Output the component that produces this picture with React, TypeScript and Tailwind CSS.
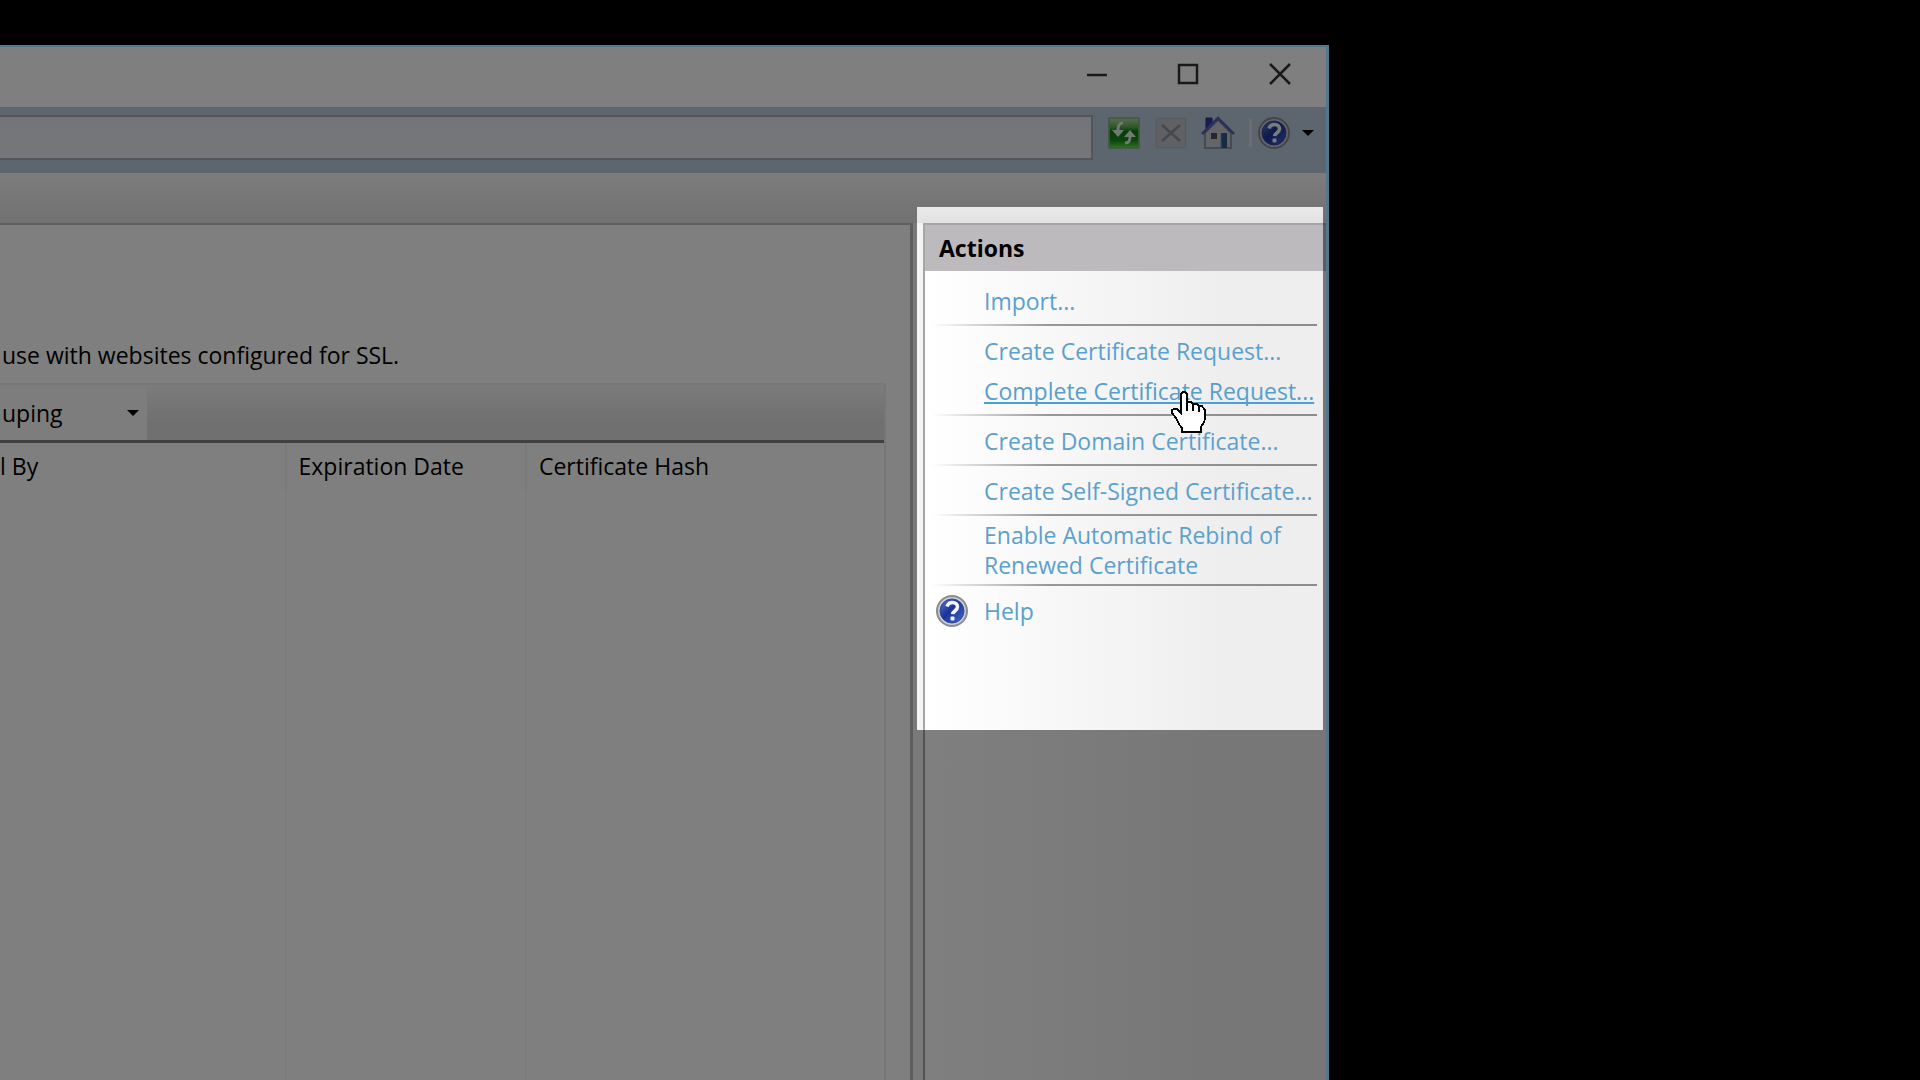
import React from "react";

function HelpIcon({ id }: { id: string }) {
  return (
    <svg viewBox="0 0 32 32" className="size-8 shrink-0" aria-hidden="true">
      <defs>
        <linearGradient id={id} x1="0" y1="0" x2="1" y2="1">
          <stop offset="0" stopColor="#5a78c8" />
          <stop offset="0.45" stopColor="#1b3596" />
          <stop offset="1" stopColor="#4468d0" />
        </linearGradient>
      </defs>
      <circle cx="16" cy="16" r="15" fill="#c9cbd4" stroke="#8b8b92" strokeWidth="2" />
      <circle cx="16" cy="16" r="12" fill={`url(#${id})`} stroke="#34489a" strokeWidth="1" />
      <path d="M11 11.500c1-3 3-4 5.500-4 3 0 5 1.700 5 4.300 0 4-4.500 3.700-4.800 7.400" fill="none" stroke="#f4f6ff" strokeWidth="3.600" />
      <rect x="14.500" y="21.500" width="4" height="4" rx="1" fill="#f4f6ff" />
    </svg>
  );
}

function RefreshIcon() {
  return (
    <svg viewBox="0 0 32 32" className="size-8" aria-hidden="true">
      <defs>
        <linearGradient id="refresh" x1="0" y1="0" x2="0" y2="1">
          <stop offset="0" stopColor="#b4dcae" />
          <stop offset="0.3" stopColor="#5cae50" />
          <stop offset="0.45" stopColor="#0b7a10" />
          <stop offset="0.75" stopColor="#12921a" />
          <stop offset="1" stopColor="#6ee050" />
        </linearGradient>
      </defs>
      <rect x="1" y="1" width="30" height="30" fill="url(#refresh)" stroke="#7fae7c" strokeWidth="1.500" />
      <path d="M15 6c-4 0-5 2-5 7" fill="none" stroke="#e4f2e2" strokeWidth="3" />
      <path d="M4 13h12l-6 7z" fill="#e4f2e2" />
      <path d="M17 26c4 0 5-2 5-6" fill="none" stroke="#e4f2e2" strokeWidth="3" />
      <path d="M16 20h12l-6-7z" fill="#e4f2e2" />
    </svg>
  );
}

function StopIcon() {
  return (
    <svg viewBox="0 0 32 32" className="size-8" aria-hidden="true">
      <rect x="1.500" y="1.500" width="29" height="29" fill="#c0c3c9" stroke="#b0b8c2" strokeWidth="1.500" />
      <path d="M7 8l18 16M25 8L7 24" fill="none" stroke="#8d9096" strokeWidth="2.500" />
    </svg>
  );
}

function HomeIcon() {
  return (
    <svg viewBox="0 0 34 34" className="h-[34px] w-[34px]" aria-hidden="true">
      <path d="M5 2h6v6l-6 6z" fill="#3038a8" stroke="#262d90" />
      <path d="M4 17L17 4l13 13v15H4z" fill="#c9cbd2" stroke="#7d828e" strokeWidth="1.500" />
      <path d="M1 18L17 2l16 16" fill="none" stroke="#5a60b4" strokeWidth="2.500" />
      <rect x="10" y="17" width="6" height="6" fill="#4c4f58" />
      <rect x="20" y="17" width="6" height="15" fill="#2c568e" />
      <path d="M20 17v15" stroke="#7e92b4" strokeWidth="1" />
    </svg>
  );
}

function HandCursor() {
  return (
    <svg
      viewBox="0 0 36 44"
      className="pointer-events-none absolute left-[246px] top-[166px] z-20 h-11 w-9"
      shapeRendering="crispEdges"
      aria-hidden="true"
    >
      <path
        d="M10 3l2-2h2l2 2v8h4l2 2h4l2 2h3l3 4v9l-1 3-3 5v5H11v-4l-3-4-3-6-4-5v-3l2-1h3l4 4z"
        fill="#fff"
        stroke="#000"
        strokeWidth="1.800"
      />
      <path d="M16 11v9M22 13v7M28 15v6" fill="none" stroke="#000" strokeWidth="1.800" />
    </svg>
  );
}

function Caret() {
  return <svg viewBox="0 0 12 6" className="h-1.5 w-3" aria-hidden="true"><path d="M0 0h12L6 6z" fill="#000" /></svg>;
}

function Separator() {
  return <div role="separator" className="mr-[9px] ml-[7px] h-0.5 bg-linear-to-r from-transparent via-[#98979a] via-30% to-[#8c8b8e]" />;
}

function Action({ children, underlined = false }: { children: string; underlined?: boolean }) {
  return (
    <a
      href="#"
      className={
        underlined
          ? "block pl-[59px] leading-10 whitespace-nowrap text-[#569fcc] underline decoration-2 underline-offset-2 decoration-[#4aa0d2] [text-decoration-skip-ink:none]"
          : "block pl-[59px] leading-10 whitespace-nowrap text-[#5ba1cd]"
      }
    >
      {children}
    </a>
  );
}

function TitleBar() {
  return (
    <header className="flex h-[60px] shrink-0 items-center justify-end bg-white pb-1.5">
      <button aria-label="Minimize" className="grid h-full w-[90px] place-items-center">
        <svg viewBox="0 0 22 22" className="size-[22px]"><path d="M1 12h20" stroke="#333" strokeWidth="2.500" /></svg>
      </button>
      <button aria-label="Maximize" className="grid h-full w-[92px] place-items-center">
        <svg viewBox="0 0 22 22" className="size-[22px]"><rect x="2" y="2" width="18" height="18" fill="none" stroke="#333" strokeWidth="2.500" /></svg>
      </button>
      <button aria-label="Close" className="grid h-full w-[92px] place-items-center">
        <svg viewBox="0 0 22 22" className="size-[22px]"><path d="M1 1l20 20M21 1L1 21" stroke="#333" strokeWidth="2.500" /></svg>
      </button>
    </header>
  );
}

function AddressBar() {
  return (
    <div className="flex h-[66px] shrink-0 items-start bg-[#bacbdc] pt-2">
      <input
        aria-label="Address"
        className="h-[45px] min-w-0 flex-1 border-2 border-l-0 border-[#a5adb9] bg-linear-to-b from-[#e6eaf0] to-[#eeeef2] outline-none"
      />
      <div className="flex h-9 shrink-0 items-center pr-2 pl-[15px]">
        <button aria-label="Refresh" className="mr-[15px]"><RefreshIcon /></button>
        <button aria-label="Stop" className="mr-3.5" disabled><StopIcon /></button>
        <button aria-label="Home" className="mr-3.5"><HomeIcon /></button>
        <span className="mr-1.5 h-7 w-[3px] bg-[#d6dce2]" />
        <button aria-label="Help menu" className="flex items-center gap-3 pr-1"><HelpIcon id="toolbarHelp" /><Caret /></button>
      </div>
    </div>
  );
}

function Certificates() {
  return (
    <main className="mr-2.5 flex min-w-0 flex-1 flex-col border-t-2 border-r-3 border-[#bcbcbc] bg-white pr-6">
      <p className="mt-[110px] pl-0.5 text-[23px] leading-10 whitespace-nowrap">use with websites configured for SSL.</p>
      <section className="mt-2 flex flex-1 flex-col border-t-2 border-r-2 border-[#efefef]">
        <div className="h-[58px] shrink-0 border-b-3 border-[#808086] bg-linear-to-b from-[#f8f8f8] to-[#e0e0e0] to-70%">
          <div className="relative flex h-full w-[147px] items-center bg-[#fbfbfb]">
            <select aria-label="Group by" className="size-full appearance-none pt-0.5 pl-0.5 text-[23px]">
              <option>uping</option>
            </select>
            <span className="pointer-events-none absolute right-2"><Caret /></span>
          </div>
        </div>
        <table className="w-full flex-1 table-fixed border-collapse text-[23px]">
          <thead>
            <tr className="h-12 text-left leading-10">
              <th className="w-[32.3%] border-r-2 border-[#f2f2f2] pt-[3px] align-top font-normal">l By</th>
              <th className="w-[27.2%] border-r-2 border-[#f2f2f2] pt-[3px] pl-3 align-top font-normal">Expiration Date</th>
              <th className="pt-[3px] pl-3 align-top font-normal">Certificate Hash</th>
            </tr>
          </thead>
          <tbody>
            <tr>
              <td className="border-r-2 border-[#f9f9f9]" />
              <td className="border-r-2 border-[#f9f9f9]" />
              <td />
            </tr>
          </tbody>
        </table>
      </section>
    </main>
  );
}

function ActionsPanel() {
  return (
    <aside className="relative flex w-[403px] shrink-0 flex-col border-t-2 border-l-2 border-[#a6a5a8] bg-linear-to-r from-white to-[#eeeeee] to-75% text-[23px]">
      <h2 className="h-[46px] shrink-0 bg-[#bcbabc] pl-3.5 text-[23px] leading-[46px] font-bold">Actions</h2>
      <nav aria-label="Actions" className="pt-2.5">
        <div className="mb-[3px]"><Action>Import...</Action></div>
        <Separator />
        <div className="mt-[5px] mb-[3px]">
          <Action>Create Certificate Request...</Action>
          <Action underlined>Complete Certificate Request...</Action>
        </div>
        <Separator />
        <div className="mt-[5px] mb-[3px]"><Action>Create Domain Certificate...</Action></div>
        <Separator />
        <div className="mt-[5px] mb-[3px]"><Action>Create Self-Signed Certificate...</Action></div>
        <Separator />
        <a href="#" className="my-1 block pl-[59px] leading-[30px] text-[#5ba1cd]">
          Enable Automatic Rebind of<br />Renewed Certificate
        </a>
        <Separator />
        <a href="#" className="mt-[5px] flex h-10 items-center gap-4 pl-[11px] leading-10 text-[#5ba1cd]">
          <HelpIcon id="panelHelp" />
          <span>Help</span>
        </a>
      </nav>
      <div className="pointer-events-none absolute -top-[18px] right-[3px] -left-2 z-10 h-[523px] shadow-[0_0_0_3000px_rgba(0,0,0,0.5)]" />
      <HandCursor />
    </aside>
  );
}

export default function App() {
  return (
    <div className="h-screen overflow-hidden bg-black pt-[45px] font-['Open_Sans','Noto_Sans',sans-serif] text-black">
      <div className="mr-[591px] flex h-full flex-col overflow-hidden border-t-2 border-r-3 border-[#507890] bg-[#f4f4f4]">
        <TitleBar />
        <AddressBar />
        <div className="h-[50px] shrink-0 bg-linear-to-b from-[#fafafa] to-[#e2e2e2]" />
        <div className="flex min-h-0 flex-1">
          <Certificates />
          <ActionsPanel />
        </div>
      </div>
    </div>
  );
}
